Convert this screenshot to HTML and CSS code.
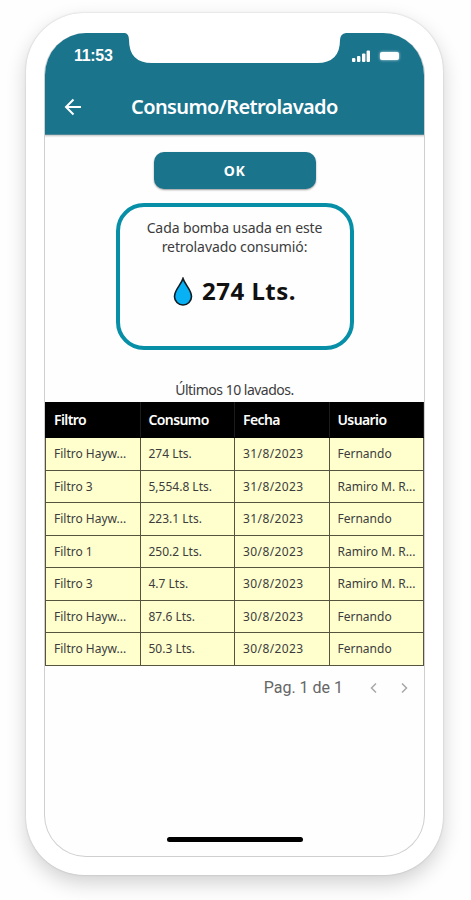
FILE: index.html
```
<!DOCTYPE html>
<html lang="es">
<head>
    <meta charset="UTF-8">
    <meta name="viewport" content="width=device-width, initial-scale=1.0">
    <title>Consumo/Retrolavado</title>
    <link rel="stylesheet" href="styles.css">
</head>
<body>
    <div class="phone">
        <div class="screen">
            <header class="header">
                <div class="status-bar">
                    <span class="time">11:53</span>
                    <div class="status-icons">
                        <svg class="signal" width="18" height="12" viewBox="0 0 18 12" fill="#fff">
                            <rect x="0" y="8" width="3.4" height="4" rx="1"/>
                            <rect x="5" y="6" width="3.4" height="6" rx="1"/>
                            <rect x="10" y="3.5" width="3.4" height="8.5" rx="1"/>
                            <rect x="14.6" y="0.5" width="3.4" height="11.5" rx="1"/>
                        </svg>
                        <span class="battery"></span>
                    </div>
                </div>
                <svg class="notch" width="221" height="31" viewBox="0 0 221 31">
                    <path d="M0 0 Q4 1 4 7 Q4 30 27 30 H192 Q215 30 215 7 Q215 1 221 0 Z" fill="#fff"/>
                </svg>
                <div class="title-bar">
                    <svg class="back" width="18" height="18" viewBox="0 0 18 18" fill="none" stroke="#fff" stroke-width="2">
                        <path d="M17 9 H2 M9.5 1.5 L2 9 L9.5 16.5"/>
                    </svg>
                    <h1>Consumo/Retrolavado</h1>
                </div>
            </header>

            <main>
                <button class="ok">OK</button>

                <div class="card">
                    <p>Cada bomba usada en este<br>retrolavado consumió:</p>
                    <div class="total">
                        <svg width="20" height="29" viewBox="0 0 20 29">
                            <path d="M10 1.5 C8 8 1.5 13 1.5 19.5 A8.5 8.5 0 0 0 18.5 19.5 C18.5 13 12 8 10 1.5 Z" fill="#08b0f4" stroke="#101c22" stroke-width="1.6"/>
                        </svg>
                        <strong>274 Lts.</strong>
                    </div>
                </div>

                <p class="caption">Últimos 10 lavados.</p>

                <table>
                    <thead>
                        <tr><th>Filtro</th><th>Consumo</th><th>Fecha</th><th>Usuario</th></tr>
                    </thead>
                    <tbody>
                        <tr><td>Filtro Hayw...</td><td>274 Lts.</td><td class="date">31/8/2023</td><td>Fernando</td></tr>
                        <tr><td>Filtro 3</td><td>5,554.8 Lts.</td><td class="date">31/8/2023</td><td>Ramiro M. R...</td></tr>
                        <tr><td>Filtro Hayw...</td><td>223.1 Lts.</td><td class="date">31/8/2023</td><td>Fernando</td></tr>
                        <tr><td>Filtro 1</td><td>250.2 Lts.</td><td class="date">30/8/2023</td><td>Ramiro M. R...</td></tr>
                        <tr><td>Filtro 3</td><td>4.7 Lts.</td><td class="date">30/8/2023</td><td>Ramiro M. R...</td></tr>
                        <tr><td>Filtro Hayw...</td><td>87.6 Lts.</td><td class="date">30/8/2023</td><td>Fernando</td></tr>
                        <tr><td>Filtro Hayw...</td><td>50.3 Lts.</td><td class="date">30/8/2023</td><td>Fernando</td></tr>
                    </tbody>
                </table>

                <div class="pager">
                    <span>Pag. 1 de 1</span>
                    <svg width="8" height="12" viewBox="0 0 8 12"><path d="M6 1.5 L1.5 6 L6 10.5"/></svg>
                    <svg width="8" height="12" viewBox="0 0 8 12"><path d="M2 1.5 L6.5 6 L2 10.5"/></svg>
                </div>
            </main>

            <div class="home-bar"></div>
        </div>
    </div>
</body>
</html>
```
FILE: styles.css
```
* { box-sizing: border-box; }
body { margin: 0; padding: 13px 28px 0 26px; height: 900px; overflow: hidden; background: #fefefe; font-family: "Noto Sans", sans-serif; color: #3c3c3c; }
h1, p { margin: 0; font-weight: normal; }

.phone { width: 417px; height: 862px; padding: 20px 18px 17px; border-radius: 58px; background: #fff; box-shadow: 0 0 2px rgba(0,0,0,0.2), 0 8px 20px rgba(0,0,0,0.18); }
.screen { display: flex; flex-direction: column; height: 824px; border: 1px solid #cfcfcf; border-top: 0; border-radius: 42px; overflow: hidden; background: #fefefe; }

.header { position: relative; flex: none; height: 102px; margin: 0 -1px; padding: 0 1px; background: #19748c; border-bottom: 1px solid #4e8798; box-shadow: 0 1px 2px rgba(0,0,0,0.25); }
.status-bar { display: flex; justify-content: space-between; align-items: center; height: 46px; padding: 0 25px 0 29px; }
.time { color: #fff; font: bold 16px "Liberation Sans", sans-serif; letter-spacing: -0.3px; }
.status-icons { display: flex; align-items: center; gap: 10px; }
.battery { width: 19px; height: 8px; border-radius: 2px; background: #fff; box-shadow: 0 0 3px rgba(255,255,255,0.8); }
.notch { position: absolute; top: 0; left: 81px; }
.title-bar { display: flex; align-items: center; height: 56px; padding-left: 19px; }
.title-bar h1 { margin-left: 49px; color: #fff; font-size: 20px; font-weight: 600; line-height: 28px; letter-spacing: -0.6px; }

main { flex: 1; display: flex; flex-direction: column; align-items: center; }
.ok { flex: none; width: 162px; height: 37px; margin-top: 17px; border: 0; border-radius: 10px; background: #19748c; color: #fff; font: 700 14px "Noto Sans", sans-serif; letter-spacing: 0.6px; box-shadow: 0 1px 2px rgba(0,0,0,0.4); }
.card { flex: none; width: 238px; height: 147px; margin-top: 14px; padding-top: 11px; border: 4px solid #088fa8; border-radius: 28px; text-align: center; }
.card p { font-size: 14px; line-height: 19px; white-space: nowrap; letter-spacing: -0.1px; }
.total { display: flex; justify-content: center; align-items: center; gap: 9px; height: 32px; margin-top: 19px; }
.total strong { color: #111; font-size: 24px; line-height: 32px; letter-spacing: 0.5px; }
.caption { margin-top: 30px; font-size: 14px; line-height: 20px; height: 22px; letter-spacing: -0.5px; }

table { flex: none; width: 379px; border-collapse: collapse; table-layout: fixed; font-size: 12px; }
th, td { padding: 0 0 0 8px; text-align: left; white-space: nowrap; overflow: hidden; }
th { height: 35px; padding-bottom: 1px; background: #000; color: #fff; font-size: 14px; font-weight: 600; letter-spacing: -0.6px; border: 1px solid #000; border-right-color: #1c1c1c; }
td { height: 32.5px; background: #ffffce; border: 1px solid #55553f; }
.date { letter-spacing: 0.4px; }

.pager { display: flex; align-items: center; align-self: flex-end; height: 44px; padding-right: 16px; color: #666; font-family: Roboto, sans-serif; font-size: 16px; }
.pager svg { fill: none; stroke: #a8a8a8; stroke-width: 1.5; margin-left: 22px; }
.pager span { margin-right: 5px; }
.home-bar { flex: none; align-self: center; width: 136px; height: 5px; margin-bottom: 14px; border-radius: 3px; background: #000; }
```
